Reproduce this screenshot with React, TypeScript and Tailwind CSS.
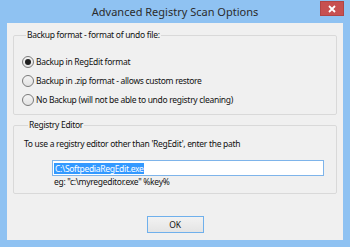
export default function App() {
  const txt = "text-[8.5px] leading-[12px] tracking-[-0.3px] text-[#111]";
  const radio = (checked: boolean, label: string) => (
    <div className="h-[19px] flex items-center">
      <div className="w-[12px] h-[12px] rounded-full border border-[#7a7a7a] bg-gradient-to-b from-[#f4f4f4] to-[#e2e2e2] flex items-center justify-center shrink-0">
        {checked && <div className="w-[6px] h-[6px] rounded-full bg-[#1e1e1e]" />}
      </div>
      <span className={`ml-[2px] ${txt}`}>{label}</span>
    </div>
  );
  return (
    <div className="w-[350px] h-[247px] bg-[#8fc2f2] flex flex-col font-['Noto_Sans',sans-serif]">
      <div className="h-[23px] relative flex items-center justify-center shrink-0">
        <span className="text-[11px] leading-[14px] text-[#2b2b2b]">Advanced Registry Scan Options</span>
        <div className="absolute right-[6px] top-[1px] w-[24px] h-[15px] bg-[#c75050] border border-[#b04545] flex items-center justify-center">
          <svg width="8" height="8" viewBox="0 0 8 8">
            <path d="M1 1 L7 7 M7 1 L1 7" stroke="#fff" strokeWidth="1.8" />
          </svg>
        </div>
      </div>
      <div className="mx-[7px] mb-[7px] flex-1 bg-[#f0f0f0] px-[6px] flex flex-col">
        <fieldset className="mt-[6px] border border-[#d9d9d9] rounded-[2px] pl-[8px] pt-[11px] pb-[5px]">
          <legend className={`ml-[4px] px-[1px] ${txt}`}>Backup format - format of undo file:</legend>
          {radio(true, "Backup in RegEdit format")}
          {radio(false, "Backup in .zip format - allows custom restore")}
          {radio(false, "No Backup (will not be able to undo registry cleaning)")}
        </fieldset>
        <fieldset className="mt-[4px] border border-[#d9d9d9] rounded-[2px] pl-[10px] pt-[7px] pb-[5px]">
          <legend className={`ml-[4px] px-[1px] ${txt}`}>Registry Editor</legend>
          <div className={txt}>To use a registry editor other than 'RegEdit', enter the path</div>
          <div className="mt-[10px] ml-[28px] w-[272px] h-[16px] border border-[#7eb4ea] bg-white flex items-center pl-[1px]">
            <span className="bg-[#3399ff] text-white text-[8.5px] leading-[11px] tracking-[-0.3px] px-[1px]">C:\SoftpediaRegEdit.exe</span>
          </div>
          <div className={`ml-[30px] ${txt}`}>eg: "c:\myregeditor.exe" %key%</div>
        </fieldset>
        <div className="mt-[22px] self-center w-[57px] h-[17px] border border-[#6fb0ec] bg-gradient-to-b from-[#f2f2f2] to-[#e4e4e4] flex items-center justify-center">
          <span className={txt}>OK</span>
        </div>
      </div>
    </div>
  );
}
